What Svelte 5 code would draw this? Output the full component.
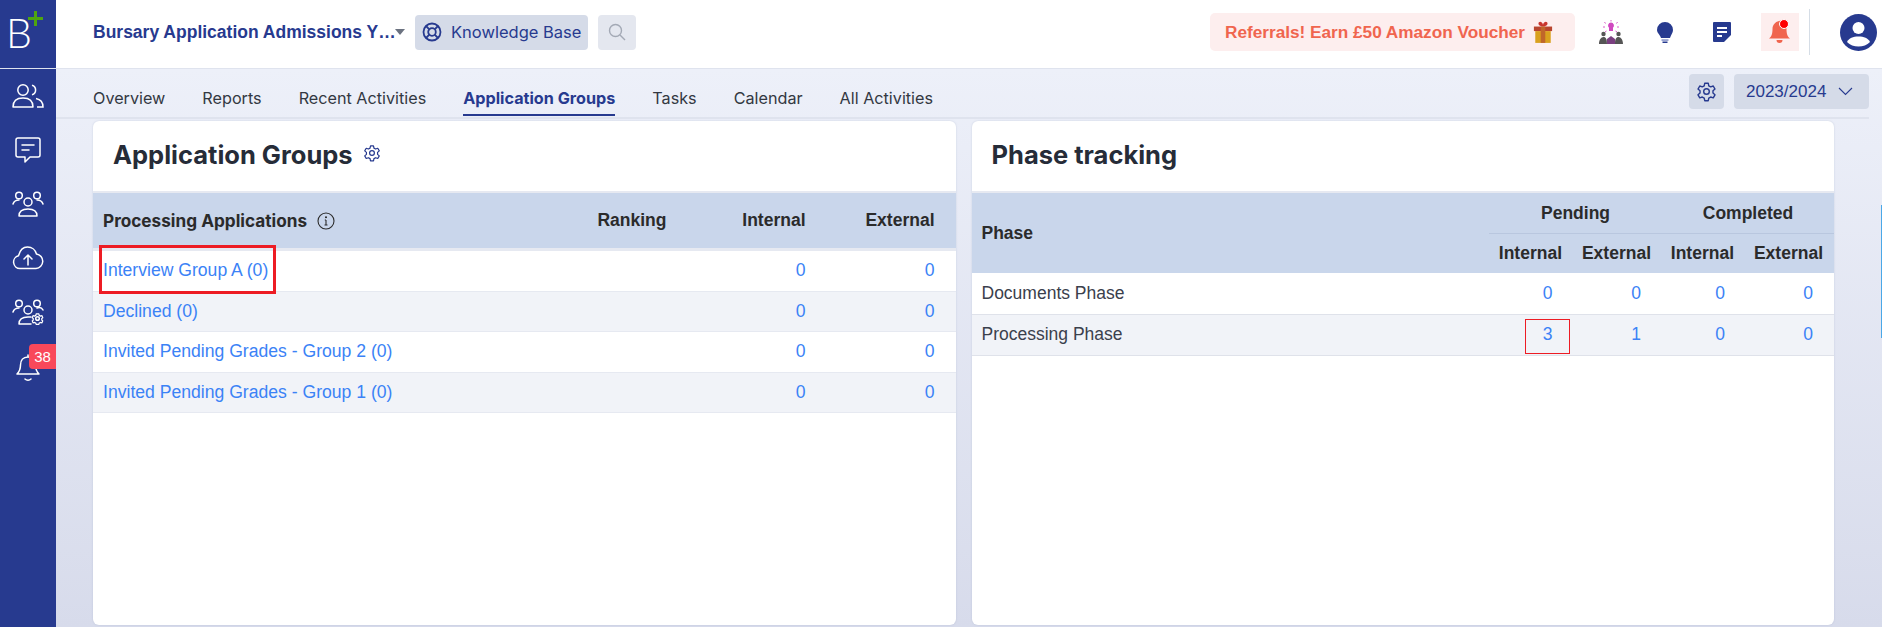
<script>
  const tabs = ['Overview', 'Reports', 'Recent Activities', 'Application Groups', 'Tasks', 'Calendar', 'All Activities'];
  const groups = ['Interview Group A (0)', 'Declined (0)', 'Invited Pending Grades - Group 2 (0)', 'Invited Pending Grades - Group 1 (0)'];
  const phases = [
    { name: 'Documents Phase', counts: [0, 0, 0, 0] },
    { name: 'Processing Phase', counts: [3, 1, 0, 0] }
  ];
</script>

{#snippet gear(size)}
  <svg width={size} height={size} viewBox="0 0 24 24" fill="none" stroke="currentColor" stroke-width="1.6" stroke-linejoin="round">
    <path d="M10 2.5h4l.6 3 2.2 1.2 2.9-1 2 3.5-2.3 2v2.6l2.3 2-2 3.5-2.9-1-2.2 1.2-.6 3h-4l-.6-3-2.2-1.2-2.9 1-2-3.5 2.3-2v-2.6l-2.3-2 2-3.5 2.9 1 2.2-1.2z" />
    <circle cx="12" cy="12" r="3.2" />
  </svg>
{/snippet}

<div class="shell">
  <aside class="side">
    <div class="logo">
      <span class="logo-b">B</span>
      <svg class="logo-plus" width="15" height="15" viewBox="0 0 15 15"><path d="M6 0h3v6h6v3H9v6H6V9H0V6h6z" fill="#4ea50f" /></svg>
    </div>
    <nav class="side-nav">
      <span class="side-item">
        <svg width="32" height="26" viewBox="0 0 32 26" fill="none" stroke="#fff" stroke-width="1.5"><circle cx="11" cy="7" r="5.2" /><path d="M1 24c0-6 4-9 10-9s10 3 10 9z" stroke-linejoin="round" /><path d="M20 2.2a5 5 0 0 1 0 9.6M24 15.5c4 .8 7 3.6 7 8.5h-6" /></svg>
      </span>
      <span class="side-item">
        <svg width="26" height="26" viewBox="0 0 26 26" fill="none" stroke="#fff" stroke-width="1.5" stroke-linejoin="round"><path d="M3 1h20a2 2 0 0 1 2 2v15a2 2 0 0 1-2 2h-8l-5 5v-5H3a2 2 0 0 1-2-2V3a2 2 0 0 1 2-2z" /><path d="M7 8h12M7 13h7" stroke-linecap="round" /></svg>
      </span>
      <span class="side-item">
        <svg width="32" height="26" viewBox="0 0 32 26" fill="none" stroke="#fff" stroke-width="1.5" stroke-linecap="round"><circle cx="7" cy="4.5" r="3.3" /><circle cx="25" cy="4.5" r="3.3" /><circle cx="16" cy="11" r="4" /><path d="M1 13c1-3 3-4 6-4M31 13c-1-3-3-4-6-4M7 25c0-5 4-7 9-7s9 2 9 7z" stroke-linejoin="round" /></svg>
      </span>
      <span class="side-item">
        <svg width="32" height="24" viewBox="0 0 32 24" fill="none" stroke="#fff" stroke-width="1.5" stroke-linecap="round" stroke-linejoin="round"><path d="M8 22.500a6.500 6.500 0 0 1-1.500-12.800C8 4 11.500 1 15.500 1c4.500 0 8 3 9 7a7.300 7.300 0 0 1-.5 14.500z" /><path d="M16 19v-10M12 13l4-4 4 4" /></svg>
      </span>
      <span class="side-item">
        <svg width="32" height="26" viewBox="0 0 32 26" fill="none" stroke="#fff" stroke-width="1.5" stroke-linecap="round"><circle cx="7" cy="4.500" r="3.300" /><circle cx="25" cy="4.500" r="3.300" /><circle cx="16" cy="11" r="4" /><path d="M1 13c1-3 3-4 6-4M31 11c-1-2-3-3-6-2M7 25c0-5 4-7 9-7h3M7 25h12" /><circle cx="25.500" cy="19.500" r="1.800" /><path d="M23.800 13.800h3.400l.4 1.800 1.700.9 1.800-.6 1 2.700-1.300 1 0 1.900 1.300 1-1 2.500-1.800-.6-1.700.9-.4 1.500h-3.400l-.4-1.500-1.700-.9-1.800.6-1-2.500 1.300-1v-1.900l-1.300-1 1-2.700 1.800.6 1.700-.9z" transform="translate(5.100 3.900) scale(.8)" stroke-linejoin="round" /></svg>
      </span>
      <span class="side-item bell">
        <svg width="24" height="28" viewBox="0 0 24 28" fill="none" stroke="#fff" stroke-width="1.5" stroke-linecap="round" stroke-linejoin="round"><path d="M12 1v2M12 3c-5 0-7.500 3.500-7.500 8 0 5-1.500 7-3.500 9h22c-2-2-3.500-4-3.500-9 0-4.500-2.500-8-7.500-8zM9 25c1.500 1.500 4.500 1.500 6 0" /></svg>
        <span class="badge">38</span>
      </span>
    </nav>
  </aside>

  <div class="main">
    <header class="top">
      <div class="top-left">
        <span class="app-title">Bursary Application Admissions Y…</span>
        <span class="caret"></span>
        <button class="kb">
          <svg width="20" height="20" viewBox="0 0 20 20" fill="none" stroke="#273a8f" stroke-width="1.8"><circle cx="10" cy="10" r="8.500" /><circle cx="10" cy="10" r="3.800" /><path d="M4 4l3.300 3.300M16 4l-3.300 3.300M4 16l3.300-3.300M16 16l-3.300-3.300" /></svg>
          Knowledge Base
        </button>
        <button class="search" aria-label="Search">
          <svg width="18" height="18" viewBox="0 0 18 18" fill="none" stroke="#a3a9b5" stroke-width="1.4"><circle cx="7.500" cy="7.500" r="6" /><path d="M12 12l5 5" /></svg>
        </button>
      </div>
      <div class="top-right">
        <button class="referral">
          Referrals! Earn £50 Amazon Voucher
          <svg width="20" height="24" viewBox="0 0 22 26"><path d="M6 4c0-3 4-3 5 1 1-4 5-4 5-1 0 2-3 3-5 3S6 6 6 4z" fill="#c8352e" /><rect x="1" y="7" width="20" height="5" fill="#b8452e" /><rect x="2.500" y="12" width="17" height="13" fill="#d9a11e" /><rect x="8.500" y="7" width="5" height="18" fill="#c0662a" /></svg>
        </button>
        <span class="ico people">
          <svg width="24" height="24" viewBox="0 0 24 24"><path d="M12 2.500a3 3 0 0 1 2 5.200V11h-4V7.700a3 3 0 0 1 2-5.200z" fill="#d048c0" /><path d="M12 0v1.500M5.500 2l1 1.500M18.500 2l-1 1.500M4 7h2M18 7h2M6 12l1.500-1M18 12l-1.500-1" stroke="#d85cc8" stroke-width="1" /><circle cx="4.500" cy="14" r="2.200" fill="#555" /><circle cx="19.500" cy="14" r="2.200" fill="#555" /><path d="M0 24c0-4 2-7 4.500-7S8 19 8 24zM16 24c0-5 1-7 3.500-7S24 20 24 24z" fill="#555" /><path d="M8 24v-5l4-3 4 3v5z" fill="#7a3f80" /></svg>
        </span>
        <span class="ico bulb">
          <svg width="16" height="21" viewBox="0 0 16 21"><path d="M8 0a8 8 0 0 1 8 8c0 3-2 4.500-3 8H4C3 12.500 0 11 0 8a8 8 0 0 1 8-8z" fill="#273a8f" /><rect x="4.500" y="17.300" width="7" height="1.500" fill="#8390c8" /><rect x="5.500" y="19.500" width="5" height="1.500" fill="#273a8f" /></svg>
        </span>
        <span class="ico doc">
          <svg width="18" height="20" viewBox="0 0 18 20"><path d="M1 0h16a1 1 0 0 1 1 1v12l-7 7H1a1 1 0 0 1-1-1V1a1 1 0 0 1 1-1z" fill="#273a8f" /><path d="M4 5h10v2H4zM4 9h10v2H4zM4 13h5v2H4z" fill="#fff" /></svg>
        </span>
        <span class="ico alert">
          <svg width="24" height="26" viewBox="0 0 24 26"><path d="M11 2a2 2 0 0 1 2 0c4 1 5.500 4 5.500 8 0 5 1 7.500 3.500 9.500H1c2.500-2 3.500-4.500 3.500-9.500 0-4 2.500-7 6.500-8zM8.500 21h6a3 3 0 0 1-6 0z" fill="#f0654e" /><circle cx="16" cy="5" r="4.500" fill="#f00" stroke="#fff" stroke-width="1" /></svg>
        </span>
        <span class="divider"></span>
        <svg class="avatar" width="37" height="37" viewBox="0 0 37 37"><circle cx="18.500" cy="18.500" r="18.500" fill="#273a8f" /><circle cx="18.500" cy="14" r="6" fill="#fff" /><path d="M7 28c2-4 6-5.500 11.500-5.500S28 24 30 28c-3 3-7 4.500-11.500 4.500S10 31 7 28z" fill="#fff" /></svg>
      </div>
    </header>

    <div class="body">
      <div class="tabbar">
        <div class="tabs">
          {#each tabs as tab}
            <span class="tab" class:active={tab === 'Application Groups'}>{tab}</span>
          {/each}
        </div>
        <div class="tab-tools">
          <button class="tool" aria-label="Settings">{@render gear(21)}</button>
          <button class="year">
            2023/2024
            <svg width="15" height="9" viewBox="0 0 15 9" fill="none" stroke="#273a8f" stroke-width="1.1"><path d="M1 1l6.500 6.500L14 1" /></svg>
          </button>
        </div>
      </div>

      <div class="cards">
        <section class="card">
          <div class="card-head">
            <h2>Application Groups</h2>
            <span class="head-gear">{@render gear(18)}</span>
          </div>
          <div class="groups-head">
            <span class="proc">
              Processing Applications
              <svg width="18" height="18" viewBox="0 0 18 18" fill="none" stroke="#2b2b2b" stroke-width="1.100"><circle cx="9" cy="9" r="8" /><path d="M9 8v5M7.500 13h3M7.800 8H9" /><circle cx="9" cy="5.200" r=".5" /></svg>
            </span>
            <span class="num-head">Ranking</span>
            <span class="num-head">Internal</span>
            <span class="num-head">External</span>
          </div>
          {#each groups as group, i}
            <div class="group-row" class:alt={i % 2 === 1}>
              <span class="link" class:marked={i === 0}>{group}</span>
              <span></span>
              <span class="val">0</span>
              <span class="val">0</span>
            </div>
          {/each}
        </section>

        <section class="card">
          <div class="card-head">
            <h2>Phase tracking</h2>
          </div>
          <table class="phases">
            <colgroup>
              <col />
              <col class="c1" />
              <col class="c2" />
              <col class="c3" />
              <col class="c4" />
            </colgroup>
            <thead>
              <tr>
                <th rowspan="2" class="phase-col">Phase</th>
                <th colspan="2" class="group-th">Pending</th>
                <th colspan="2" class="group-th">Completed</th>
              </tr>
              <tr>
                <th class="sub">Internal</th>
                <th class="sub">External</th>
                <th class="sub">Internal</th>
                <th class="sub">External</th>
              </tr>
            </thead>
            <tbody>
              {#each phases as phase, i}
                <tr class:alt={i === 1}>
                  <td class="phase-name">{phase.name}</td>
                  {#each phase.counts as n, j}
                    <td class="count">
                      {#if i === 1 && j === 0}<span class="cell-mark"></span>{/if}
                      {n}
                    </td>
                  {/each}
                </tr>
              {/each}
            </tbody>
          </table>
        </section>
      </div>
      <span class="edge"></span>
    </div>
  </div>
</div>

<style>
  :global(body) {
    margin: 0;
    overflow: hidden;
  }

  .shell {
    display: flex;
    width: 1882px;
    height: 627px;
    font-family: 'Liberation Sans', Arial, sans-serif;
    color: #2b2f38;
  }

  button {
    border: none;
    font-family: inherit;
    cursor: pointer;
    padding: 0;
  }

  .side {
    width: 56px;
    flex: none;
    background: #273a8f;
    display: flex;
    flex-direction: column;
  }

  .logo {
    position: relative;
    height: 68px;
    border-bottom: 1px solid #dfe3ee;
  }

  .logo-b {
    position: absolute;
    left: 6px;
    top: 11px;
    font-family: 'Lato', sans-serif;
    font-weight: 300;
    font-size: 41px;
    line-height: 44px;
    color: #fff;
  }

  .logo-plus {
    position: absolute;
    left: 28px;
    top: 11px;
  }

  .side-nav {
    display: flex;
    flex-direction: column;
    align-items: center;
    padding-top: 14px;
    gap: 28px;
  }

  .side-item {
    display: flex;
    justify-content: center;
    align-items: center;
    height: 26px;
    position: relative;
    width: 56px;
  }

  .bell {
    margin-top: 2px;
  }

  .badge {
    position: absolute;
    top: -11px;
    right: 0;
    width: 27px;
    height: 25px;
    background: #f9485a;
    border-radius: 4px 0 0 4px;
    color: #fff;
    font-size: 15px;
    line-height: 25px;
    text-align: center;
  }

  .main {
    flex: 1;
    display: flex;
    flex-direction: column;
    min-width: 0;
  }

  .top {
    height: 68px;
    box-sizing: border-box;
    background: #fff;
    display: flex;
    justify-content: space-between;
    align-items: center;
    padding: 0 5px 4px 37px;
  }

  .top-left,
  .top-right {
    display: flex;
    align-items: center;
  }

  .app-title {
    font-size: 17.5px;
    font-weight: 700;
    color: #273a8f;
    width: 302px;
    white-space: nowrap;
  }

  .caret {
    width: 0;
    height: 0;
    border-left: 5.500px solid transparent;
    border-right: 5.500px solid transparent;
    border-top: 6px solid #6b7280;
    margin-right: 10px;
  }

  .kb {
    width: 173px;
    height: 35px;
    background: #d5dbe8;
    border-radius: 4px;
    color: #273a8f;
    font-family: 'Inter', sans-serif;
    font-size: 16.500px;
    display: flex;
    align-items: center;
    gap: 9px;
    padding-left: 7px;
    white-space: nowrap;
  }

  .search {
    width: 38px;
    height: 35px;
    margin-left: 10px;
    background: #e4e7ef;
    border-radius: 4px;
    display: flex;
    align-items: center;
    justify-content: center;
  }

  .referral {
    width: 365px;
    height: 38px;
    background: #fdeeee;
    border-radius: 5px;
    color: #f0654e;
    font-size: 17.200px;
    font-weight: 700;
    display: flex;
    align-items: center;
    gap: 8px;
    padding-left: 15px;
    box-sizing: border-box;
    white-space: nowrap;
  }

  .ico {
    display: flex;
    align-items: center;
    justify-content: center;
  }

  .people {
    margin-left: 24px;
  }

  .bulb {
    margin-left: 34px;
  }

  .doc {
    margin-left: 40px;
  }

  .alert {
    width: 38px;
    height: 38px;
    margin-left: 30px;
    background: #fdeeee;
  }

  .divider {
    width: 1px;
    height: 46px;
    background: #d5dde6;
    margin: 0 30px 0 10px;
  }

  .body {
    flex: 1;
    position: relative;
    background: linear-gradient(180deg, #edf0f9 0%, #d7dbeb 100%);
    border-top: 1px solid #dfe3ee;
    padding-right: 13px;
    min-height: 0;
  }

  .tabbar {
    height: 50px;
    box-sizing: border-box;
    border-bottom: 2px solid #dfe3ee;
    display: flex;
    justify-content: space-between;
    padding-left: 37px;
  }

  .tabs {
    display: flex;
    gap: 37px;
  }

  .tab {
    height: 47px;
    box-sizing: border-box;
    padding-top: 19px;
    font-family: 'Inter', sans-serif;
    font-size: 16.200px;
    color: #333842;
  }

  .tab.active {
    font-weight: 700;
    color: #273a8f;
    border-bottom: 2px solid #273a8f;
  }

  .tab-tools {
    display: flex;
    gap: 10px;
    padding-top: 5px;
  }

  .tool {
    width: 35px;
    height: 35px;
    background: #d5dbe8;
    border-radius: 4px;
    color: #273a8f;
    display: flex;
    align-items: center;
    justify-content: center;
  }

  .year {
    width: 135px;
    height: 35px;
    background: #d5dbe8;
    border-radius: 4px;
    color: #273a8f;
    font-size: 17px;
    display: flex;
    align-items: center;
    gap: 12px;
    padding-left: 12px;
    box-sizing: border-box;
  }

  .cards {
    display: flex;
    gap: 16px;
    padding: 2px 35px 0 37px;
  }

  .card {
    flex: 1;
    height: 504px;
    background: #fff;
    border-radius: 6px;
    box-shadow: 0 0 2px rgba(150, 160, 190, 0.4);
    overflow: hidden;
    min-width: 0;
  }

  .card-head {
    height: 70px;
    border-bottom: 2px solid #e6e9f1;
    display: flex;
    align-items: flex-start;
    padding-left: 20px;
  }

  .card-head h2 {
    margin: 18px 0 0;
    font-family: 'Inter', sans-serif;
    font-size: 25.500px;
    line-height: 32px;
    font-weight: 700;
    color: #262c38;
  }

  .head-gear {
    color: #273a8f;
    margin: 23px 0 0 10px;
    display: flex;
  }

  .groups-head,
  .group-row {
    display: grid;
    grid-template-columns: 1fr 80px 139px 129px;
    align-items: center;
    padding: 0 21px 0 10px;
    box-sizing: border-box;
  }

  .groups-head {
    height: 58px;
    background: #c9d6eb;
    border-bottom: 3px solid #e6e9f1;
    font-size: 17.500px;
    font-weight: 700;
    color: #2b2b2b;
  }

  .proc {
    font-family: 'Inter', sans-serif;
    font-size: 17.200px;
    font-weight: 700;
    display: flex;
    align-items: center;
    gap: 10px;
    white-space: nowrap;
  }

  .num-head {
    text-align: right;
  }

  .group-row {
    height: 40.500px;
    border-bottom: 1px solid #e6e9f1;
    font-size: 17.600px;
  }

  .group-row.alt {
    background: #f1f3f8;
  }

  .link,
  .val,
  .count {
    color: #3b82f6;
  }

  .link {
    position: relative;
    white-space: nowrap;
  }

  /* annotation box drawn over the first link */
  .marked::after {
    content: '';
    position: absolute;
    left: -4px;
    top: -15px;
    width: 171px;
    height: 43px;
    border: 3px solid #ed1c24;
  }

  .val {
    text-align: right;
  }

  .phases {
    width: 100%;
    border-collapse: collapse;
    table-layout: fixed;
    font-size: 17.500px;
  }

  .c1 {
    width: 84px;
  }

  .c2 {
    width: 89px;
  }

  .c3 {
    width: 83px;
  }

  .c4 {
    width: 89px;
  }

  .phases th {
    background: #c9d6eb;
    color: #2b2b2b;
    font-weight: 700;
    padding: 0;
  }

  .phase-col {
    text-align: left;
    padding-left: 10px !important;
  }

  .group-th {
    height: 40px;
    border-bottom: 1px solid #b9c7df;
  }

  .sub {
    height: 39px;
    text-align: right;
    padding-right: 11px !important;
  }

  .phases tbody tr {
    height: 41px;
    border-bottom: 1px solid #dfe2ea;
  }

  .phases tbody tr.alt {
    background: #f1f3f8;
  }

  .phase-name {
    padding-left: 10px;
    color: #3a404c;
  }

  .count {
    position: relative;
    text-align: center;
    padding-left: 34px;
  }

  .count:nth-child(odd) {
    padding-left: 38px;
  }

  .cell-mark {
    position: absolute;
    left: 36px;
    top: 4px;
    width: 43px;
    height: 33px;
    border: 1px solid #ed1c24;
  }

  .edge {
    position: absolute;
    right: 0;
    top: 136px;
    width: 1px;
    height: 133px;
    background: #4aa8e8;
  }
</style>
